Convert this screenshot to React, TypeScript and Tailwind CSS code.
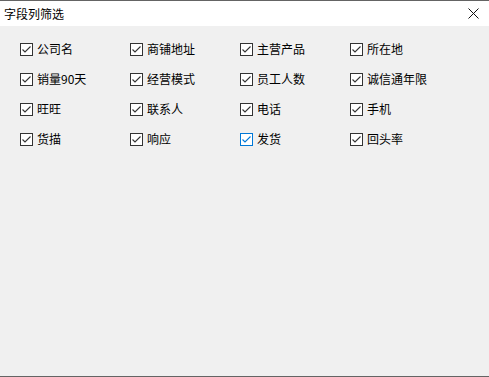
import React from "react";

const fields = [
  ["公司名", "商铺地址", "主营产品", "所在地"],
  ["销量90天", "经营模式", "员工人数", "诚信通年限"],
  ["旺旺", "联系人", "电话", "手机"],
  ["货描", "响应", "发货", "回头率"],
];

const CheckBox = ({ hover }: { hover?: boolean }) => (
  <span
    className={`flex h-[13px] w-[13px] shrink-0 items-center justify-center border bg-white ${
      hover ? "border-[#0078d7]" : "border-[#333333]"
    }`}
  >
    <svg width="11" height="11" viewBox="0 0 11 11">
      <path
        d="M1.5 5.5 L4 8 L9.5 2.5"
        fill="none"
        stroke={hover ? "#0078d7" : "#333333"}
        strokeWidth="1.1"
      />
    </svg>
  </span>
);

const App = () => {
  return (
    <div
      className="flex h-[377px] w-[489px] flex-col border-y border-[#646464] bg-[#f0f0f0] text-[12px] text-black"
      style={{ fontFamily: '"Noto Sans CJK SC", "Noto Sans", sans-serif' }}
    >
      {/* title bar */}
      <div className="flex h-[25px] items-center justify-between bg-white pl-[4px] pr-[10px]">
        <span>字段列筛选</span>
        <svg width="11" height="11" viewBox="0 0 11 11">
          <path d="M0.5 0.5 L10.5 10.5 M10.5 0.5 L0.5 10.5" stroke="#111" strokeWidth="1" />
        </svg>
      </div>

      {/* field grid */}
      <div className="flex flex-col pl-5 pt-2">
        {fields.map((row, r) => (
          <div key={r} className="grid h-[30px] grid-cols-[110px_110px_110px_110px] items-center">
            {row.map((name) => (
              <label key={name} className="flex items-center gap-[4px]">
                <CheckBox hover={name === "发货"} />
                <span className="leading-none">{name}</span>
              </label>
            ))}
          </div>
        ))}
      </div>
    </div>
  );
};

export default App;
